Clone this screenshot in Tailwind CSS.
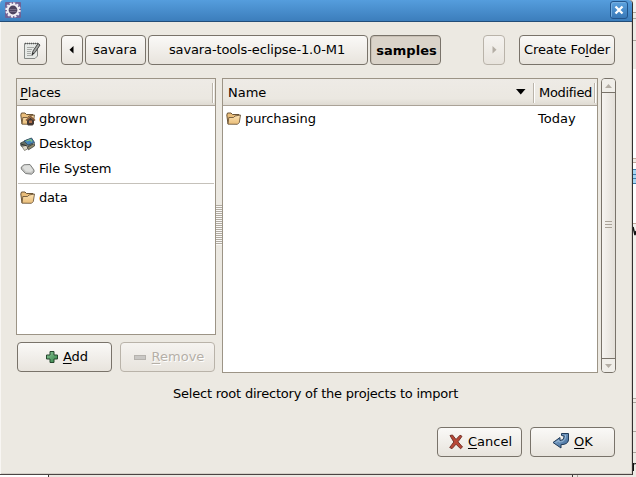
<!DOCTYPE html>
<html lang="en">
<head>
<meta charset="utf-8">
<title>Select root directory</title>
<script src="https://cdn.jsdelivr.net/npm/@tailwindcss/browser@4"></script>
</head>
<body class="relative w-[636px] h-[477px] overflow-hidden bg-[#edeae4] text-[13px] leading-[16px] text-black font-['DejaVu_Sans',sans-serif]">
<svg width="0" height="0" class="absolute">
  <defs>
    <linearGradient id="fold" x1="0" y1="0" x2="0" y2="1"><stop offset="0" stop-color="#fde3b5"/><stop offset="1" stop-color="#e9bd78"/></linearGradient>
    <linearGradient id="green" x1="0" y1="0" x2="1" y2="1"><stop offset="0" stop-color="#8fc79a"/><stop offset="1" stop-color="#2f8043"/></linearGradient>
    <linearGradient id="blue" x1="0" y1="0" x2="1" y2="1"><stop offset="0" stop-color="#8fb2d4"/><stop offset="1" stop-color="#3b6595"/></linearGradient>
    <symbol id="folder" viewBox="0 0 16 16">
      <path d="M2 13L.8 4L1.5 2H5L6.5 3.5H13L13.5 5" fill="#e9bd7b" stroke="#6b5436"/>
      <path d="M2 13.2L2.8 6.5H7.5L9 5L14.5 4L13.3 11.5L11.5 13.3Z" fill="url(#fold)" stroke="#5f4a30" stroke-width=".8" stroke-linejoin="round"/>
    </symbol>
  </defs>
</svg>

<!-- Window behind the dialog -->
<div class="absolute left-0 top-[475px] w-full h-[2px] flex">
  <div class="w-[48px] bg-white"></div><div class="w-px bg-[#3a3633]"></div><div class="w-[523px] bg-[#ece8e2]"></div><div class="w-px bg-[#3a3633]"></div><div class="w-[4px]"></div><div class="w-px bg-[#aaa49b]"></div>
</div>
<svg class="absolute left-[633px] top-0" width="3" height="477">
  <path d="M0 0H3V12H0Z" fill="#f3f1ee"/><path d="M0 12.5H3M0 18.5H3M0 40.5H3M0 398.5H3M0 402.5H3M0 431.5H3M0 452.5H3" stroke="#aba59c"/>
  <path d="M0 69H3V158H0ZM0 163H3V398H0Z" fill="#fff"/>
  <path d="M0 158.5H3M0 162.5H3M0 223.5H3" stroke="#c0a99b"/><path d="M0 169H3V184H0Z" fill="#a5d7f4"/><path d="M0 169.5H3M0 174.5H3M0 178.5H3M0 183.5H3" stroke="#3f7ba8"/>
  <path d="M0 224H3V398H0Z" fill="#f3f1ed"/><path d="M0 227L2 235L3 231" fill="none" stroke="#111" stroke-width="1.5"/><path d="M.5 471V463M.5 465Q2 462 3 464" fill="none" stroke="#111"/>
</svg>

<main class="absolute left-0 top-0 w-[633px] h-[475px] flex flex-col bg-[#ece9e2] border-r border-b border-r-[#33302e] border-b-[#4b4543] shadow-[inset_1px_0_#f8f6f3,inset_-1px_-1px_#d5d0c8] rounded-tr-[4px]">
  <header class="h-[22px] shrink-0 flex items-center justify-between pl-[5px] pr-[4px] bg-linear-to-b from-[#559ddd] to-[#3c7ebc] border-b border-[#234d78] rounded-t-[4px]">
    <svg width="16" height="16" viewBox="0 0 16 16" class="relative -top-px"><rect width="16" height="16" rx="1" fill="#6e6296"/><circle cx="8" cy="8" r="6.7" fill="none" stroke="#f3eff5" stroke-width="2" stroke-dasharray="2.1 1.4"/><circle cx="8" cy="8" r="5.3" fill="#4e4460" stroke="#f4f0f6" stroke-width="1.8"/><path d="M4.5 7.5H11.5M4.5 9.5H11.5" stroke="#766c86"/></svg>
    <div class="w-[18px] h-[18px] rounded-[3px] border border-[#22558c] bg-linear-to-b from-[#5ca2df] to-[#3878b7] flex items-center justify-center relative -top-px shadow-[inset_1px_1px_#75afe1]"><svg width="10" height="10" viewBox="0 0 10 10"><path d="M1.5 1.5L8.5 8.5M8.5 1.5L1.5 8.5" stroke="#fff" stroke-width="2.3"/></svg></div>
  </header>

  <nav class="flex shrink-0 h-[30px] mt-[13px] ml-[17px]">
    <button class="w-[30px] rounded-[4px] border border-[#79736a] bg-linear-to-b from-[#faf9f7] to-[#e8e4dd] flex items-center justify-center mr-[14px]">
      <svg width="18" height="20" viewBox="0 0 18 20"><path d="M1.5 3.5H14.5V16L12 18.5H1.5Z" fill="#e6e9e6" stroke="#858885"/><path d="M2 3.5H15" stroke="#555" stroke-width="1.6" stroke-dasharray="1 1"/><path d="M4 7.5H11M4 9.5H9M4 11.5H8M4 13.5H8M4 15.5H10" stroke="#a8aaa7"/><path d="M9 15L10 11L15 3.5L17 5L12 12.5Z" fill="#a3a5a3" stroke="#484a48"/><path d="M9 15L9.7 12.5L11.2 13.5Z" fill="#222"/></svg>
    </button>
    <button class="w-[22px] rounded-[4px] border border-[#79736a] bg-linear-to-b from-[#faf9f7] to-[#e8e4dd] flex items-center justify-center mr-[2px]"><svg width="5" height="8" class="relative -left-px"><path d="M4.5 0V7.6L.5 3.8Z"/></svg></button>
    <button class="w-[61px] rounded-[4px] border border-[#79736a] bg-linear-to-b from-[#faf9f7] to-[#e8e4dd] mr-[2px] pr-px">savara</button>
    <button class="w-[220px] rounded-[4px] border border-[#79736a] bg-linear-to-b from-[#faf9f7] to-[#e8e4dd] mr-[2px] pr-[2px] tracking-[-0.12px]">savara-tools-eclipse-1.0-M1</button>
    <button class="w-[71px] rounded-[4px] border border-[#79736a] bg-[#dad3c9] shadow-[inset_1px_1px_#c8c0b5] font-bold mr-[42px]"><span class="relative top-px left-px">samples</span></button>
    <button class="w-[22px] rounded-[4px] border border-[#b9b3a9] bg-linear-to-b from-[#f5f3f0] to-[#e8e4dd] flex items-center justify-center mr-[14px]"><svg width="5" height="8"><path d="M.5 0V7.6L4.5 3.8Z" fill="#b4aea5"/></svg></button>
    <button class="w-[96px] rounded-[4px] border border-[#79736a] bg-linear-to-b from-[#faf9f7] to-[#e8e4dd] whitespace-nowrap tracking-[-0.12px]">Create Fo<span class="underline underline-offset-2">l</span>der</button>
  </nav>

  <div class="flex h-[295px] mt-[13px] ml-[16px] shrink-0">
    <section class="w-[200px] flex flex-col">
      <div class="h-[257px] border border-[#9c9486] bg-white flex flex-col">
        <div class="h-[27px] shrink-0 border-b border-[#aaa297] bg-linear-to-b from-[#eeebe6] from-0% via-[#ebe8e1] via-75% to-[#dfdbd3] pl-[3px] pr-px pt-px flex items-center justify-between"><span class="tracking-[-0.1px]"><span class="underline underline-offset-2">P</span>laces</span><i class="h-[20px] w-[2px] border-l border-[#bab4aa] bg-white"></i></div>
        <ul>
          <li class="h-[25px] flex items-center pl-[3px] gap-[3px]"><svg width="16" height="16"><use href="#folder"/><path d="M6 9.5L10.5 5.5L15 9.5" fill="none" stroke="#8a5a36" stroke-width="1.6"/><path d="M7 9.5L10.5 6.5L14 9.5V13L12.5 14.5H8L7 13Z" fill="#463a34"/><path d="M9 9.5H12V12H9Z" fill="#b4704b"/></svg><span class="tracking-[-0.1px]">gbrown</span></li>
          <li class="h-[25px] flex items-center pl-[3px] gap-[3px]"><svg width="16" height="16" viewBox="0 0 16 16"><path d="M.5 7L7 4L13 8L7 13L1 10Z" fill="#647064" stroke="#3d4844" stroke-width=".8"/><path d="M4 5L11.5 2L14.5 6.5L8 9Z" fill="#4585b8" stroke="#3a5568"/><path d="M6.5 5L10.5 3.7L12 5.5" fill="none" stroke="#7fc482" stroke-width="1.3"/><path d="M2 10.5L7.5 9V13L4.5 14.5Z" fill="#ddd9c9" stroke="#77756a" stroke-width=".8"/><path d="M7.5 11L14.5 7.5V10L8.5 13.8Z" fill="#8f8a69" stroke="#444" stroke-width=".8"/><path d="M1 8L7 10" stroke="#333"/></svg><span class="tracking-[-0.1px]">Desktop</span></li>
          <li class="h-[25px] flex items-center pl-[3px] gap-[3px]"><svg width="16" height="16" viewBox="0 0 16 16"><path d="M1.3 6L4 3.8L10 3.5L14 9V11L11.5 13.2L5.5 12.5L1.3 8Z" fill="#c4c5c2" stroke="#707270" stroke-width=".9" stroke-linejoin="round"/><path d="M2.5 6.3L4.5 4.5L9.7 4.3L13 9.3L10.7 11L6 10.5Z" fill="#dedfdd"/></svg><span class="tracking-[-0.2px]">File System</span></li>
        </ul>
        <hr class="mx-px mt-[2px] mb-[1px] border-[#c5c1ba]">
        <div class="h-[25px] flex items-center pl-[3px] gap-[3px]"><svg width="16" height="16"><use href="#folder"/></svg><span class="tracking-[-0.2px]">data</span></div>
      </div>
      <div class="flex gap-[8px] mt-[7px] pl-px h-[30px]">
        <button class="w-[95px] rounded-[4px] border border-[#79736a] bg-linear-to-b from-[#faf9f7] to-[#e8e4dd] flex items-center justify-center gap-[4px] pl-[4px]"><svg width="14" height="14" viewBox="0 0 14 14"><path d="M5 1.5H9V5H12.5V9H9V12.5H5V9H1.5V5H5Z" fill="url(#green)" stroke="#24472d" stroke-linejoin="round"/></svg><span><span class="underline underline-offset-2">A</span>dd</span></button>
        <button class="w-[95px] rounded-[4px] border border-[#b9b3a9] bg-linear-to-b from-[#f5f3f0] to-[#e8e4dd] flex items-center justify-center gap-[5px] pl-[2px] text-[#b5afa7] [text-shadow:1px_1px_#fff]"><svg width="14" height="14" viewBox="0 0 14 14"><rect x="1.5" y="5.5" width="11" height="4" fill="#c9c7c4" stroke="#b5b2ad"/></svg><span><span class="underline underline-offset-2">R</span>emove</span></button>
      </div>
    </section>
    <div class="w-[6px] pt-[127px]"><div class="h-[40px] bg-[repeating-linear-gradient(to_bottom,#b1aba1_0px,#b1aba1_1px,#faf9f7_1px,#faf9f7_2px)]"></div></div>
    <section class="w-[376px] h-[295px] border border-[#9c9486] bg-white">
      <div class="h-[27px] border-b border-[#aaa297] bg-linear-to-b from-[#eeebe6] from-0% via-[#ebe8e1] via-75% to-[#dfdbd3] pl-[5px] pr-px pt-px flex items-center"><span class="flex-1">Name</span><svg width="10" height="6" class="mr-[7px] relative -top-px"><path d="M0 0H9.5L4.75 5.5Z"/></svg><i class="h-[20px] w-[2px] border-l border-[#bab4aa] bg-white"></i><span class="w-[59px] pl-[4px] tracking-[-0.3px]">Modified</span><i class="h-[20px] w-[2px] shrink-0 border-l border-[#bab4aa] bg-white"></i></div>
      <div class="h-[25px] flex items-center pl-[3px] gap-[3px]"><svg width="16" height="16"><use href="#folder"/></svg><span class="w-[290px] tracking-[-0.1px]">purchasing</span><span>Today</span></div>
    </section>
    <aside class="ml-[3px] w-[15px] h-[295px] rounded-[4px] border border-[#79736a] bg-linear-to-r from-[#f6f4f1] to-[#e4e0d9] flex flex-col items-center justify-between">
      <div class="w-full h-[14px] rounded-t-[3px] bg-[#f0eee9] border-b border-[#79736a] flex items-center justify-center"><svg width="7" height="4"><path d="M0 4H7L3.5 0Z" fill="#b4aea5"/></svg></div>
      <div class="w-[7px] h-[7px] border-y border-[#aaa398] flex items-center relative -top-px"><i class="w-full h-px bg-[#aaa398]"></i></div>
      <div class="w-full h-[14px] rounded-b-[3px] bg-[#f0eee9] border-t border-[#79736a] flex items-center justify-center"><svg width="7" height="4"><path d="M0 0H7L3.5 4Z" fill="#b4aea5"/></svg></div>
    </aside>
  </div>

  <p class="mt-[13px] h-[16px] pl-[173px] whitespace-nowrap tracking-[-0.21px]">Select root directory of the projects to import</p>
  <footer class="flex gap-[8px] h-[30px] mt-[25px] ml-[437px]">
    <button class="w-[85px] rounded-[4px] border border-[#79736a] bg-linear-to-b from-[#faf9f7] to-[#e8e4dd] flex items-center justify-center gap-[4px] pl-px"><svg width="16" height="16" viewBox="0 0 16 16"><path d="M2 1.5L4.5 1L8 5.5L12 1.2L14 2.3L10 7.8L14.5 13L12.5 14.7L8 10.2L4 14.7L1.7 13.5L5.8 8Z" fill="#b84736" stroke="#76352c" stroke-linejoin="round"/></svg><span><span class="underline underline-offset-2">C</span>ancel</span></button>
    <button class="w-[85px] rounded-[4px] border border-[#79736a] bg-linear-to-b from-[#faf9f7] to-[#e8e4dd] flex items-center justify-center gap-[4px]"><svg width="18" height="18" viewBox="0 0 18 18" class="relative -top-px"><path d="M9.5 1.5H16.5V8Q16 12.5 9 12.7V16L1 10.5L8 5.5V8.5Q12 8.5 12 5V4L9.5 3.5Z" fill="url(#blue)" stroke="#203a58" stroke-linejoin="round"/><path d="M3.5 10.5L7 8.3V10Q13 10 13.5 5V3" fill="none" stroke="#a3c1dc" stroke-width=".8"/></svg><span><span class="underline underline-offset-2">O</span>K</span></button>
  </footer>
</main>
</body>
</html>
